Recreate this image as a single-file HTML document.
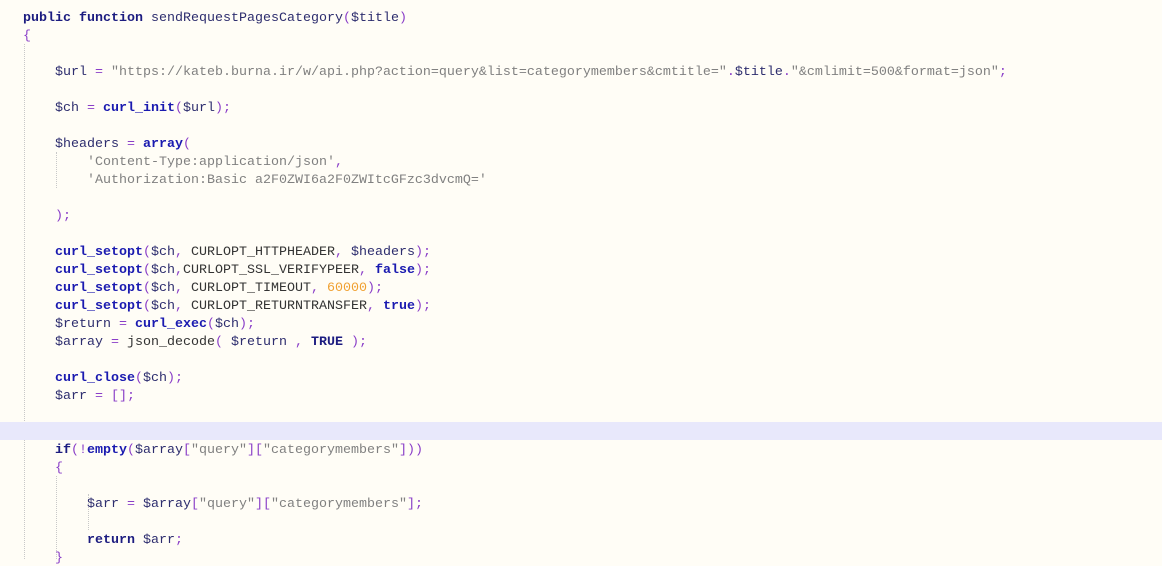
<!DOCTYPE html>
<html><head><style>
body{margin:0;width:1162px;height:559px;overflow:hidden;background:#fffdf6;font-family:"Liberation Mono",monospace;font-size:13.33px;}
.c{position:absolute;left:0;top:8px;width:1162px;}
.l{height:18px;line-height:21px;white-space:pre;padding-left:23px;color:#1c1c5c;position:relative;overflow:hidden;}
.h{background:#e8e8fb;}
.k{color:#1c1c80;font-weight:bold}
.f{color:#1a1ab0;font-weight:bold}
.v{color:#2d2d6e}
.p{color:#8a3ec8}
.s{color:#808080}
.n{color:#f0a030}
.t{color:#333}
.g{position:absolute;width:0;border-left:1px dotted #c8c8c8;}
</style></head><body>
<div class="g" style="left:24px;top:44px;height:515px"></div>
<div class="g" style="left:56px;top:152px;height:36px"></div>
<div class="g" style="left:56px;top:476px;height:83px"></div>
<div class="g" style="left:88px;top:494px;height:36px"></div>
<div class="c">
<div class="l"><span class="k">public function</span> <span class="v">sendRequestPagesCategory</span><span class="p">(</span><span class="v">$title</span><span class="p">)</span></div>
<div class="l"><span class="p">{</span></div>
<div class="l"> </div>
<div class="l">    <span class="v">$url</span> <span class="p">=</span> <span class="s">"https://kateb.burna.ir/w/api.php?action=query&amp;list=categorymembers&amp;cmtitle="</span><span class="p">.</span><span class="v">$title</span><span class="p">.</span><span class="s">"&amp;cmlimit=500&amp;format=json"</span><span class="p">;</span></div>
<div class="l"> </div>
<div class="l">    <span class="v">$ch</span> <span class="p">=</span> <span class="f">curl_init</span><span class="p">(</span><span class="v">$url</span><span class="p">);</span></div>
<div class="l"> </div>
<div class="l">    <span class="v">$headers</span> <span class="p">=</span> <span class="f">array</span><span class="p">(</span></div>
<div class="l">        <span class="s">'Content-Type:application/json'</span><span class="p">,</span></div>
<div class="l">        <span class="s">'Authorization:Basic a2F0ZWI6a2F0ZWItcGFzc3dvcmQ='</span></div>
<div class="l"> </div>
<div class="l">    <span class="p">);</span></div>
<div class="l"> </div>
<div class="l">    <span class="f">curl_setopt</span><span class="p">(</span><span class="v">$ch</span><span class="p">,</span> <span class="t">CURLOPT_HTTPHEADER</span><span class="p">,</span> <span class="v">$headers</span><span class="p">);</span></div>
<div class="l">    <span class="f">curl_setopt</span><span class="p">(</span><span class="v">$ch</span><span class="p">,</span><span class="t">CURLOPT_SSL_VERIFYPEER</span><span class="p">,</span> <span class="f">false</span><span class="p">);</span></div>
<div class="l">    <span class="f">curl_setopt</span><span class="p">(</span><span class="v">$ch</span><span class="p">,</span> <span class="t">CURLOPT_TIMEOUT</span><span class="p">,</span> <span class="n">60000</span><span class="p">);</span></div>
<div class="l">    <span class="f">curl_setopt</span><span class="p">(</span><span class="v">$ch</span><span class="p">,</span> <span class="t">CURLOPT_RETURNTRANSFER</span><span class="p">,</span> <span class="f">true</span><span class="p">);</span></div>
<div class="l">    <span class="v">$return</span> <span class="p">=</span> <span class="f">curl_exec</span><span class="p">(</span><span class="v">$ch</span><span class="p">);</span></div>
<div class="l">    <span class="v">$array</span> <span class="p">=</span> <span class="t">json_decode</span><span class="p">(</span> <span class="v">$return</span> <span class="p">,</span> <span class="k">TRUE</span> <span class="p">);</span></div>
<div class="l"> </div>
<div class="l">    <span class="f">curl_close</span><span class="p">(</span><span class="v">$ch</span><span class="p">);</span></div>
<div class="l">    <span class="v">$arr</span> <span class="p">=</span> <span class="p">[];</span></div>
<div class="l"> </div>
<div class="l h"> </div>
<div class="l">    <span class="k">if</span><span class="p">(!</span><span class="f">empty</span><span class="p">(</span><span class="v">$array</span><span class="p">[</span><span class="s">"query"</span><span class="p">][</span><span class="s">"categorymembers"</span><span class="p">]))</span></div>
<div class="l">    <span class="p">{</span></div>
<div class="l"> </div>
<div class="l">        <span class="v">$arr</span> <span class="p">=</span> <span class="v">$array</span><span class="p">[</span><span class="s">"query"</span><span class="p">][</span><span class="s">"categorymembers"</span><span class="p">];</span></div>
<div class="l"> </div>
<div class="l">        <span class="k">return</span> <span class="v">$arr</span><span class="p">;</span></div>
<div class="l">    <span class="p">}</span></div>
</div>
</body></html>
